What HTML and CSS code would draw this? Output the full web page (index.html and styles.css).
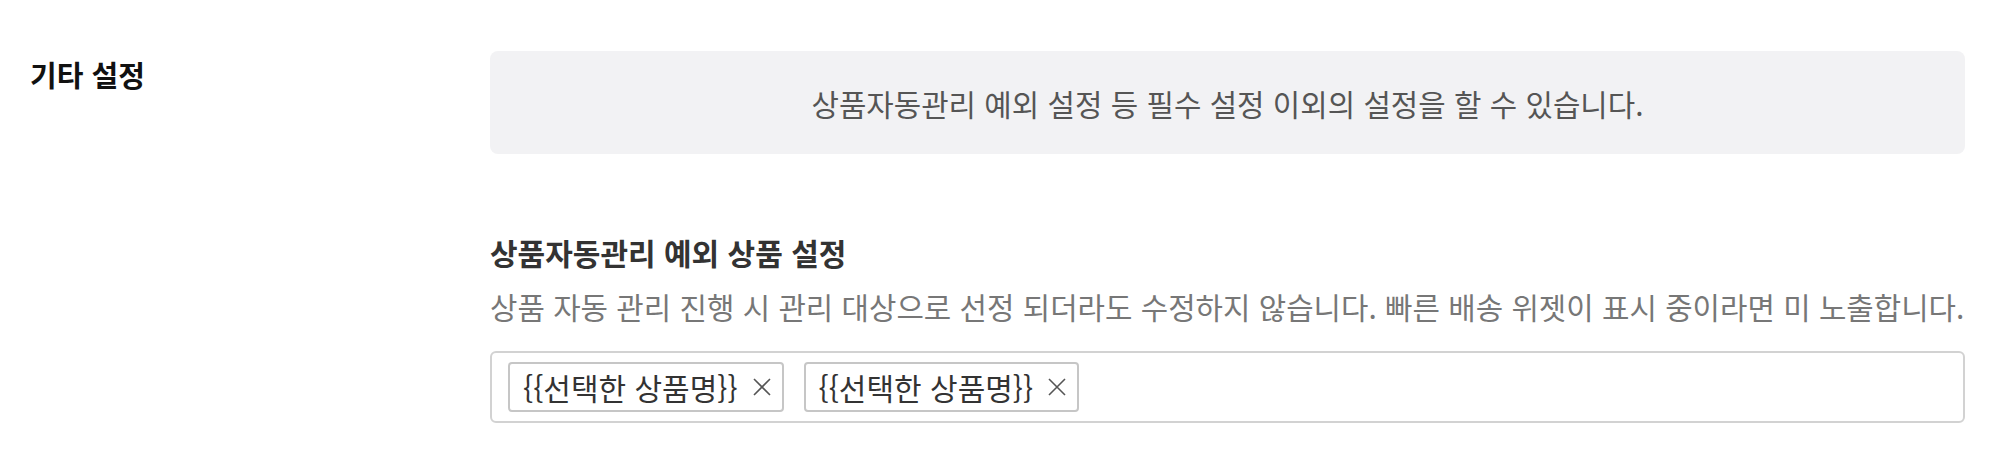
FILE: index.html
```html
<!DOCTYPE html>
<html lang="ko">
  <head>
    <meta charset="UTF-8" />
    <meta name="viewport" content="width=device-width, initial-scale=1.0" />
    <title>기타 설정</title>
    <link rel="stylesheet" href="styles.css">
  </head>
  <body>
    <div class="settings">
      <h2 class="settings-label">기타 설정</h2>
      <div class="settings-body">
        <div class="notice">상품자동관리 예외 설정 등 필수 설정 이외의 설정을 할 수 있습니다.</div>
        <div class="option">
          <h3 class="option-title">상품자동관리 예외 상품 설정</h3>
          <p class="option-desc">상품 자동 관리 진행 시 관리 대상으로 선정 되더라도 수정하지 않습니다. 빠른 배송 위젯이 표시 중이라면 미 노출합니다.</p>
          <div class="tag-input">
            <span class="tag">
              <span class="tag-text">{{선택한 상품명}}</span>
              <button class="tag-remove" type="button">
                <svg viewBox="0 0 18 18" width="18" height="18"><path d="M1 1L17 17M17 1L1 17" /></svg>
              </button>
            </span>
            <span class="tag">
              <span class="tag-text">{{선택한 상품명}}</span>
              <button class="tag-remove" type="button">
                <svg viewBox="0 0 18 18" width="18" height="18"><path d="M1 1L17 17M17 1L1 17" /></svg>
              </button>
            </span>
          </div>
        </div>
      </div>
    </div>
  </body>
</html>
```

FILE: styles.css
```css
* {
  box-sizing: border-box;
  margin: 0;
  padding: 0;
}

body {
  font-family: "Noto Sans CJK KR", "Noto Sans", sans-serif;
  background: #fff;
  color: #333;
}

.settings {
  display: flex;
  padding: 51px 35px 0 30px;
}

.settings-label {
  width: 460px;
  flex-shrink: 0;
  margin-top: 3px;
  font-size: 29px;
  line-height: 40px;
  font-weight: bold;
  color: #111;
}

.settings-body {
  flex: 1;
  min-width: 0;
}

.notice {
  height: 103px;
  display: flex;
  align-items: center;
  justify-content: center;
  background: #f2f2f4;
  border-radius: 8px;
  font-size: 29.8px;
  color: #555;
}

.option {
  margin-top: 78px;
}

.option-title {
  font-size: 30px;
  line-height: 40px;
  font-weight: bold;
  color: #333;
}

.option-desc {
  margin-top: 14px;
  font-size: 29.8px;
  line-height: 40px;
  color: #777;
  white-space: nowrap;
}

.tag-input {
  margin-top: 25px;
  height: 72px;
  display: flex;
  align-items: center;
  gap: 20px;
  padding: 0 16px;
  border: 2px solid #d2d2d2;
  border-radius: 6px;
}

.tag {
  height: 50px;
  display: flex;
  align-items: center;
  gap: 15px;
  padding: 0 11px 0 13px;
  border: 2px solid #c6c6c6;
  border-radius: 4px;
}

.tag-text {
  font-size: 30px;
  color: #333;
}

.tag-remove {
  display: flex;
  border: none;
  background: none;
  cursor: pointer;
}

.tag-remove svg {
  stroke: #555;
  stroke-width: 1.6;
  fill: none;
}
```
